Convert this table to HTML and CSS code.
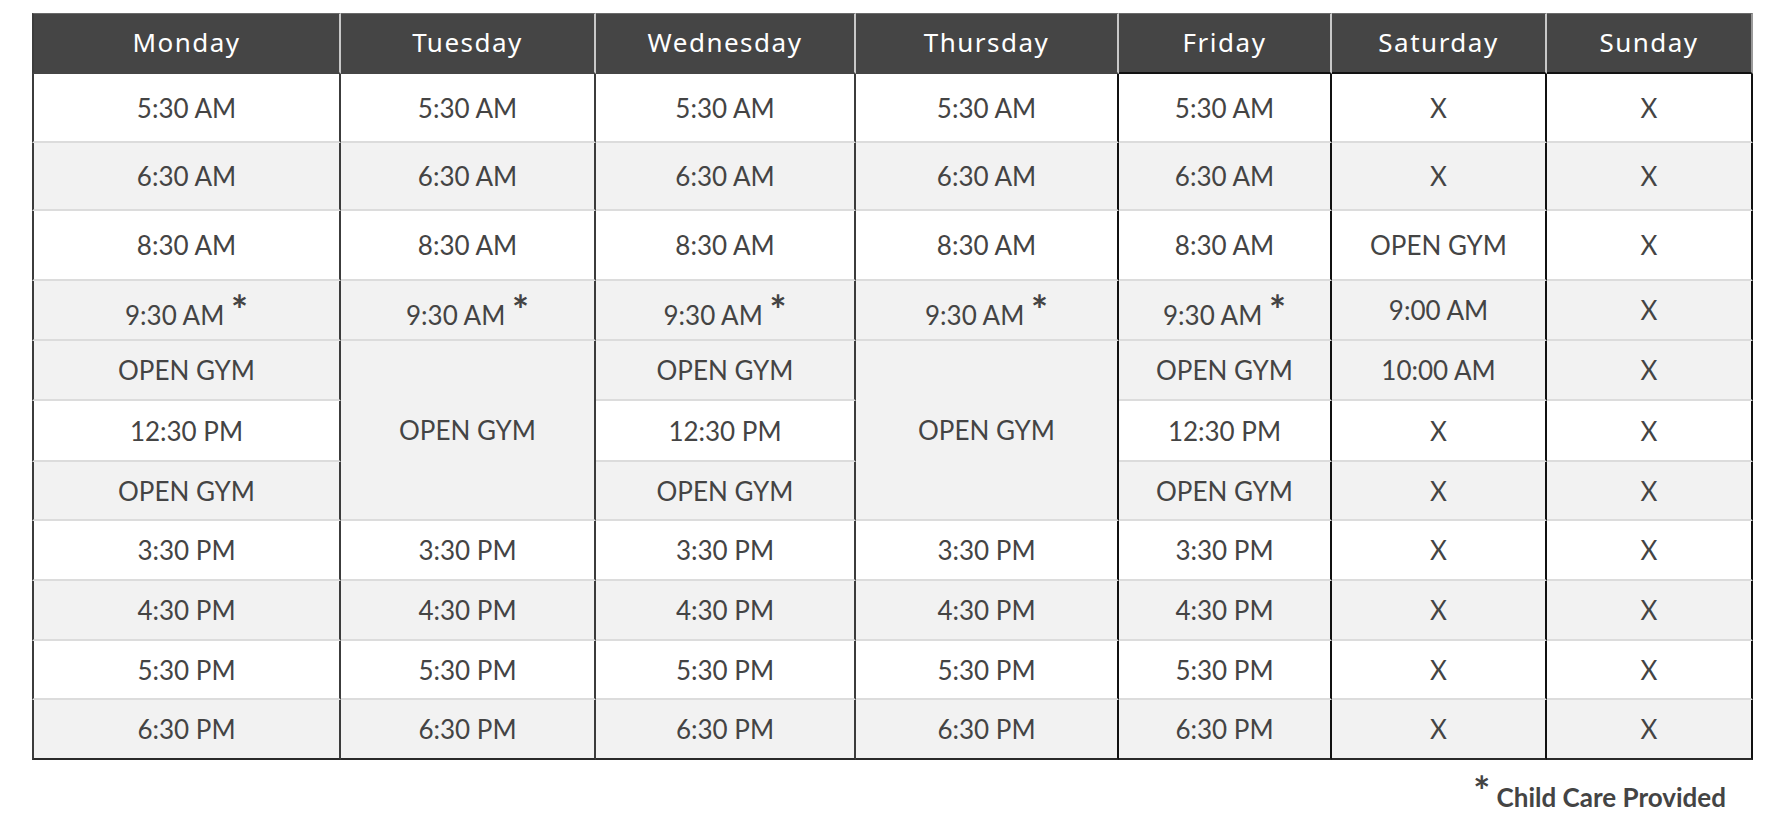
FILE: index.html
```html
<!DOCTYPE html>
<html lang="en">
<head>
<meta charset="utf-8">
<title>Class Schedule</title>
<link rel="stylesheet" href="styles.css">
</head>
<body>
<div class="page">
  <table class="schedule">
    <colgroup>
      <col class="c-mon"><col class="c-tue"><col class="c-wed"><col class="c-thu"><col class="c-fri"><col class="c-sat"><col class="c-sun">
    </colgroup>
    <thead>
      <tr class="head">
        <th class="first">Monday</th><th>Tuesday</th><th>Wednesday</th><th>Thursday</th><th class="dk">Friday</th><th class="dk">Saturday</th><th class="dk last">Sunday</th>
      </tr>
    </thead>
    <tbody>
      <tr class="r-tall1 white">
        <td class="first">5:30 AM</td><td>5:30 AM</td><td>5:30 AM</td><td class="bk">5:30 AM</td><td class="bk">5:30 AM</td><td class="bk">X</td><td class="bk">X</td>
      </tr>
      <tr class="r-tall2 gray">
        <td class="first">6:30 AM</td><td>6:30 AM</td><td>6:30 AM</td><td class="bk">6:30 AM</td><td class="bk">6:30 AM</td><td class="bk">X</td><td class="bk">X</td>
      </tr>
      <tr class="r-tall3 white">
        <td class="first">8:30 AM</td><td>8:30 AM</td><td>8:30 AM</td><td class="bk">8:30 AM</td><td class="bk">8:30 AM</td><td class="bk">OPEN GYM</td><td class="bk">X</td>
      </tr>
      <tr class="r60 gray">
        <td class="first">9:30 AM <span class="star">*</span></td><td>9:30 AM <span class="star">*</span></td><td>9:30 AM <span class="star">*</span></td><td class="bk">9:30 AM <span class="star">*</span></td><td class="bk">9:30 AM <span class="star">*</span></td><td class="bk">9:00 AM</td><td class="bk">X</td>
      </tr>
      <tr class="r60 gray">
        <td class="first">OPEN GYM</td><td rowspan="3" class="span">OPEN GYM</td><td>OPEN GYM</td><td rowspan="3" class="span bk">OPEN GYM</td><td class="bk">OPEN GYM</td><td class="bk">10:00 AM</td><td class="bk">X</td>
      </tr>
      <tr class="r61 white">
        <td class="first">12:30 PM</td><td>12:30 PM</td><td class="bk">12:30 PM</td><td class="bk">X</td><td class="bk">X</td>
      </tr>
      <tr class="r59 gray">
        <td class="first">OPEN GYM</td><td>OPEN GYM</td><td class="bk">OPEN GYM</td><td class="bk">X</td><td class="bk">X</td>
      </tr>
      <tr class="r60 white">
        <td class="first">3:30 PM</td><td>3:30 PM</td><td>3:30 PM</td><td class="bk">3:30 PM</td><td class="bk">3:30 PM</td><td class="bk">X</td><td class="bk">X</td>
      </tr>
      <tr class="r60 gray">
        <td class="first">4:30 PM</td><td>4:30 PM</td><td>4:30 PM</td><td class="bk">4:30 PM</td><td class="bk">4:30 PM</td><td class="bk">X</td><td class="bk">X</td>
      </tr>
      <tr class="r59 white">
        <td class="first">5:30 PM</td><td>5:30 PM</td><td>5:30 PM</td><td class="bk">5:30 PM</td><td class="bk">5:30 PM</td><td class="bk">X</td><td class="bk">X</td>
      </tr>
      <tr class="r60 gray lastrow">
        <td class="first">6:30 PM</td><td>6:30 PM</td><td>6:30 PM</td><td class="bk">6:30 PM</td><td class="bk">6:30 PM</td><td class="bk">X</td><td class="bk">X</td>
      </tr>
    </tbody>
  </table>
  <p class="note"><span class="note-star">*</span> Child Care Provided</p>
</div>
</body>
</html>
```

FILE: styles.css
```css
html, body {
  margin: 0;
  padding: 0;
  background: #ffffff;
}

.page {
  padding: 13px 0 0 32px;
  width: 1721px;
}

.schedule {
  width: 1721px;
  table-layout: fixed;
  border-collapse: separate;
  border-spacing: 0;
  font-family: Lato, "Liberation Sans", sans-serif;
  font-size: 26px;
  color: #444444;
}

.c-mon { width: 309px; }
.c-tue { width: 255px; }
.c-wed { width: 260px; }
.c-thu { width: 263px; }
.c-fri { width: 213px; }
.c-sat { width: 215px; }
.c-sun { width: 206px; }

.head {
  height: 61px;
}

.schedule th {
  background: #454545;
  color: #ffffff;
  font-family: "Noto Sans", sans-serif;
  font-weight: 400;
  font-size: 26px;
  letter-spacing: 1.5px;
  padding: 0 0 2px 0;
  text-align: center;
  vertical-align: middle;
  border-top: 1px solid #6a6a6a;
  border-right: 2px solid #c8c8c8;
  border-bottom: 2px solid #454545;
}

.schedule th.first {
  border-left: 2px solid #3c3c3c;
}

.schedule th.dk {
  border-bottom-color: #111111;
}

.schedule th.last {
  border-right-color: #9a9a9a;
}

.schedule td {
  padding: 0;
  text-align: center;
  vertical-align: middle;
  line-height: normal;
  border-right: 2px solid #3c3c3c;
  border-bottom: 2px solid #dcdcdc;
}

.schedule td.first {
  border-left: 2px solid #3c3c3c;
}

.schedule td.bk {
  border-right-color: #111111;
}

.white td { background: #ffffff; }
.gray td { background: #f2f2f2; }
.schedule td.span { background: #f2f2f2; }

.lastrow td {
  border-bottom-color: #2a2a2a;
}

.r-tall1 { height: 69px; }
.r-tall2 { height: 68px; }
.r-tall3 { height: 70px; }
.r60 { height: 60px; }
.r61 { height: 61px; }
.r59 { height: 59px; }

.star {
  font-size: 40px;
  font-weight: 700;
  line-height: 1;
  vertical-align: 0;
}

.note {
  margin: 22px 0 0 0;
  padding-right: 27px;
  text-align: right;
  font-family: Lato, "Liberation Sans", sans-serif;
  font-weight: 700;
  font-size: 26px;
  line-height: 30px;
  color: #444444;
}

.note-star {
  font-size: 40px;
  line-height: 0;
  vertical-align: 1px;
}
```
